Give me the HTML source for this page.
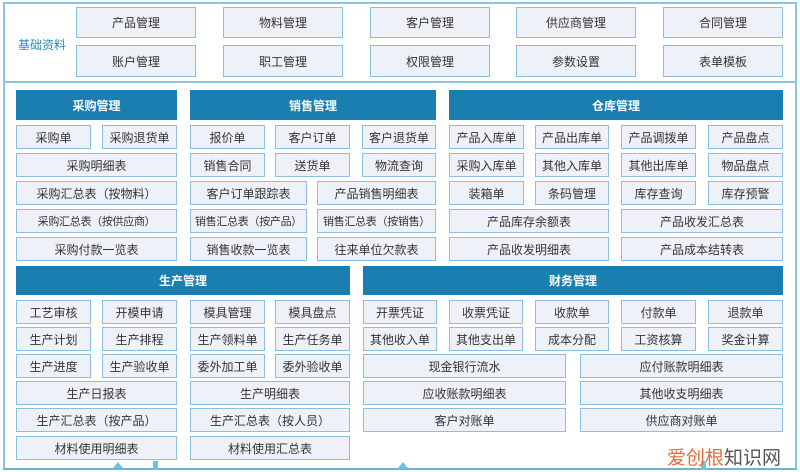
<!DOCTYPE html><html><head><meta charset="utf-8"><style>
body{margin:0;width:800px;height:472px;background:#fff;position:relative;overflow:hidden;font-family:"Liberation Sans","Noto Sans CJK SC",sans-serif}
.b{position:absolute;box-sizing:border-box;background:#eef2f8;border:1.5px solid #8bbfdc;color:#333;font-size:12px;display:flex;align-items:center;justify-content:center;white-space:nowrap}
.s{font-size:11px;letter-spacing:-0.3px}
.h{position:absolute;box-sizing:border-box;background:#1a7fb0;color:#fff;font-size:12px;font-weight:bold;display:flex;align-items:center;justify-content:center}
.l{position:absolute;background:#8cc3de}
</style></head><body>
<div class="l" style="left:3px;top:2px;width:794px;height:1.5px"></div>
<div class="l" style="left:3px;top:2px;width:1.5px;height:468px"></div>
<div class="l" style="left:795px;top:2px;width:1.5px;height:468px"></div>
<div class="l" style="left:3px;top:468px;width:794px;height:2px;background:#6cb3d6"></div>
<div class="l" style="left:3px;top:81px;width:794px;height:1.5px"></div>
<div style="position:absolute;left:18px;top:36px;font-size:12px;color:#2a8ac0">基础资料</div>
<div class="b" style="left:76px;top:7px;width:120px;height:31px">产品管理</div>
<div class="b" style="left:223px;top:7px;width:120px;height:31px">物料管理</div>
<div class="b" style="left:370px;top:7px;width:120px;height:31px">客户管理</div>
<div class="b" style="left:516px;top:7px;width:120px;height:31px">供应商管理</div>
<div class="b" style="left:663px;top:7px;width:120px;height:31px">合同管理</div>
<div class="b" style="left:76px;top:45px;width:120px;height:32px">账户管理</div>
<div class="b" style="left:223px;top:45px;width:120px;height:32px">职工管理</div>
<div class="b" style="left:370px;top:45px;width:120px;height:32px">权限管理</div>
<div class="b" style="left:516px;top:45px;width:120px;height:32px">参数设置</div>
<div class="b" style="left:663px;top:45px;width:120px;height:32px">表单模板</div>

<div class="h" style="left:16px;top:90px;width:161px;height:30px">采购管理</div>
<div class="h" style="left:190px;top:90px;width:246px;height:30px">销售管理</div>
<div class="h" style="left:449px;top:90px;width:334px;height:30px">仓库管理</div>

<div class="b" style="left:16px;top:125px;width:75px;height:24px">采购单</div>
<div class="b" style="left:102px;top:125px;width:75px;height:24px">采购退货单</div>
<div class="b" style="left:16px;top:153px;width:161px;height:24px">采购明细表</div>
<div class="b" style="left:16px;top:181px;width:161px;height:24px">采购汇总表（按物料）</div>
<div class="b s" style="left:16px;top:209px;width:161px;height:24px">采购汇总表（按供应商）</div>
<div class="b" style="left:16px;top:237px;width:161px;height:24px">采购付款一览表</div>

<div class="b" style="left:190px;top:125px;width:75px;height:24px">报价单</div>
<div class="b" style="left:275px;top:125px;width:75px;height:24px">客户订单</div>
<div class="b" style="left:362px;top:125px;width:74px;height:24px">客户退货单</div>
<div class="b" style="left:190px;top:153px;width:75px;height:24px">销售合同</div>
<div class="b" style="left:275px;top:153px;width:75px;height:24px">送货单</div>
<div class="b" style="left:362px;top:153px;width:74px;height:24px">物流查询</div>
<div class="b" style="left:190px;top:181px;width:117px;height:24px">客户订单跟踪表</div>
<div class="b" style="left:317px;top:181px;width:119px;height:24px">产品销售明细表</div>
<div class="b s" style="left:190px;top:209px;width:117px;height:24px">销售汇总表（按产品）</div>
<div class="b s" style="left:317px;top:209px;width:119px;height:24px">销售汇总表（按销售）</div>
<div class="b" style="left:190px;top:237px;width:117px;height:24px">销售收款一览表</div>
<div class="b" style="left:317px;top:237px;width:119px;height:24px">往来单位欠款表</div>

<div class="b" style="left:449px;top:125px;width:75px;height:24px">产品入库单</div>
<div class="b" style="left:535px;top:125px;width:74px;height:24px">产品出库单</div>
<div class="b" style="left:621px;top:125px;width:75px;height:24px">产品调拨单</div>
<div class="b" style="left:708px;top:125px;width:75px;height:24px">产品盘点</div>
<div class="b" style="left:449px;top:153px;width:75px;height:24px">采购入库单</div>
<div class="b" style="left:535px;top:153px;width:74px;height:24px">其他入库单</div>
<div class="b" style="left:621px;top:153px;width:75px;height:24px">其他出库单</div>
<div class="b" style="left:708px;top:153px;width:75px;height:24px">物品盘点</div>
<div class="b" style="left:449px;top:181px;width:75px;height:24px">装箱单</div>
<div class="b" style="left:535px;top:181px;width:74px;height:24px">条码管理</div>
<div class="b" style="left:621px;top:181px;width:75px;height:24px">库存查询</div>
<div class="b" style="left:708px;top:181px;width:75px;height:24px">库存预警</div>
<div class="b" style="left:449px;top:209px;width:160px;height:24px">产品库存余额表</div>
<div class="b" style="left:621px;top:209px;width:162px;height:24px">产品收发汇总表</div>
<div class="b" style="left:449px;top:237px;width:160px;height:24px">产品收发明细表</div>
<div class="b" style="left:621px;top:237px;width:162px;height:24px">产品成本结转表</div>

<div class="h" style="left:16px;top:266px;width:334px;height:29px">生产管理</div>
<div class="h" style="left:363px;top:266px;width:420px;height:29px">财务管理</div>

<div class="b" style="left:16px;top:300px;width:75px;height:24px">工艺审核</div>
<div class="b" style="left:102px;top:300px;width:75px;height:24px">开模申请</div>
<div class="b" style="left:190px;top:300px;width:75px;height:24px">模具管理</div>
<div class="b" style="left:275px;top:300px;width:75px;height:24px">模具盘点</div>
<div class="b" style="left:16px;top:327px;width:75px;height:24px">生产计划</div>
<div class="b" style="left:102px;top:327px;width:75px;height:24px">生产排程</div>
<div class="b" style="left:190px;top:327px;width:75px;height:24px">生产领料单</div>
<div class="b" style="left:275px;top:327px;width:75px;height:24px">生产任务单</div>
<div class="b" style="left:16px;top:354px;width:75px;height:24px">生产进度</div>
<div class="b" style="left:102px;top:354px;width:75px;height:24px">生产验收单</div>
<div class="b" style="left:190px;top:354px;width:75px;height:24px">委外加工单</div>
<div class="b" style="left:275px;top:354px;width:75px;height:24px">委外验收单</div>
<div class="b" style="left:16px;top:381px;width:161px;height:24px">生产日报表</div>
<div class="b" style="left:190px;top:381px;width:160px;height:24px">生产明细表</div>
<div class="b" style="left:16px;top:408px;width:161px;height:24px">生产汇总表（按产品）</div>
<div class="b" style="left:190px;top:408px;width:160px;height:24px">生产汇总表（按人员）</div>
<div class="b" style="left:16px;top:436px;width:161px;height:24px">材料使用明细表</div>
<div class="b" style="left:190px;top:436px;width:160px;height:24px">材料使用汇总表</div>

<div class="b" style="left:363px;top:300px;width:74px;height:24px">开票凭证</div>
<div class="b" style="left:449px;top:300px;width:74px;height:24px">收票凭证</div>
<div class="b" style="left:535px;top:300px;width:74px;height:24px">收款单</div>
<div class="b" style="left:621px;top:300px;width:75px;height:24px">付款单</div>
<div class="b" style="left:708px;top:300px;width:75px;height:24px">退款单</div>
<div class="b" style="left:363px;top:327px;width:74px;height:24px">其他收入单</div>
<div class="b" style="left:449px;top:327px;width:74px;height:24px">其他支出单</div>
<div class="b" style="left:535px;top:327px;width:74px;height:24px">成本分配</div>
<div class="b" style="left:621px;top:327px;width:75px;height:24px">工资核算</div>
<div class="b" style="left:708px;top:327px;width:75px;height:24px">奖金计算</div>
<div class="b" style="left:363px;top:354px;width:203px;height:24px">现金银行流水</div>
<div class="b" style="left:580px;top:354px;width:203px;height:24px">应付账款明细表</div>
<div class="b" style="left:363px;top:381px;width:203px;height:24px">应收账款明细表</div>
<div class="b" style="left:580px;top:381px;width:203px;height:24px">其他收支明细表</div>
<div class="b" style="left:363px;top:408px;width:203px;height:24px">客户对账单</div>
<div class="b" style="left:580px;top:408px;width:203px;height:24px">供应商对账单</div>

<div style="position:absolute;left:113px;top:462px;width:0;height:0;border-left:5px solid transparent;border-right:5px solid transparent;border-bottom:6px solid #6cc6e0"></div>
<div class="l" style="left:153px;top:461px;width:5px;height:9px;background:#6cc6e0"></div>
<div style="position:absolute;left:398px;top:462px;width:0;height:0;border-left:5px solid transparent;border-right:5px solid transparent;border-bottom:6px solid #6cc6e0"></div>
<div class="l" style="left:701px;top:461px;width:5px;height:9px;background:#6cc6e0"></div>
<div style="position:absolute;left:667px;top:443px;font-size:19px;color:#555;white-space:nowrap"><span style="color:#e0703a">爱创根</span>知识网</div>
</body></html>
